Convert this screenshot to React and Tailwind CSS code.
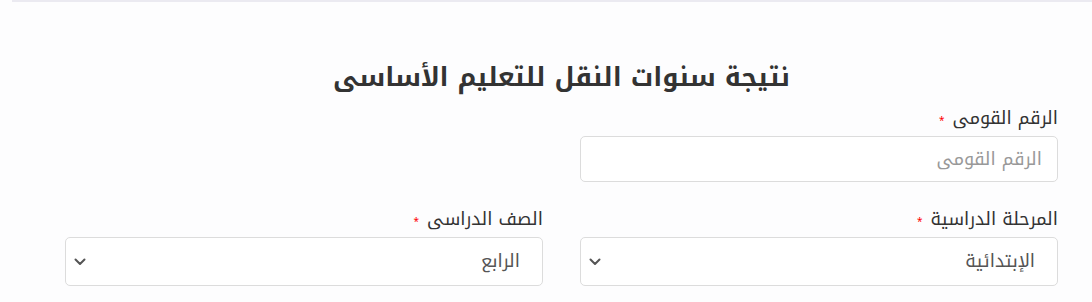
import React from "react";

const FONT = { fontFamily: '"Noto Kufi Arabic","Noto Sans Arabic","DejaVu Sans",sans-serif' };

function Chevron() {
  return (
    <svg className="pointer-events-none absolute left-[9px] top-1/2 -translate-y-1/2" width="12" height="8" viewBox="0 0 12 8" fill="none">
      <path d="M1.5 1.5 L6 6 L10.5 1.5" stroke="#555" strokeWidth="2" strokeLinecap="round" strokeLinejoin="round" />
    </svg>
  );
}

function Label({ children }) {
  return (
    <label className="mb-[6px] flex items-center gap-[8px] text-[18px] leading-[24px] text-[#333]">
      <span>{children}</span>
      <span className="translate-y-[3px] text-[10px] leading-none text-[#ff0000]">*</span>
    </label>
  );
}

function SelectField({ label, value }) {
  return (
    <div className="flex flex-col">
      <Label>{label}</Label>
      <div className="relative">
        <select
          defaultValue={value}
          className="h-[49px] w-full appearance-none rounded-[5px] border border-[#dcdcdc] bg-white pr-[22px] pl-[30px] text-[18px] text-[#555] outline-none"
          style={FONT}
        >
          <option value={value}>{value}</option>
        </select>
        <Chevron />
      </div>
    </div>
  );
}

export default function App() {
  return (
    <div dir="rtl" className="min-h-[302px] w-full bg-[#fdfdfe]" style={FONT}>
      <div className="ml-[12px] h-[2px] bg-[#ebeaf1]" />
      <div className="pl-[65px] pr-[34px] pt-[56px]">
        <h1 className="text-center text-[26px] font-bold leading-[40px] text-[#333]">
          نتيجة سنوات النقل للتعليم الأساسى
        </h1>
        <div className="mt-[8px] grid grid-cols-2 gap-x-[37px] gap-y-[25px]">
          <div className="flex flex-col">
            <Label>الرقم القومى</Label>
            <input
              placeholder="الرقم القومى"
              className="h-[46px] w-full rounded-[5px] border border-[#dcdcdc] bg-white px-[15px] text-[18px] text-[#555] outline-none placeholder:text-[#999]"
              style={FONT}
            />
          </div>
          <div />
          <SelectField label="المرحلة الدراسية" value="الإبتدائية" />
          <SelectField label="الصف الدراسى" value="الرابع" />
        </div>
      </div>
    </div>
  );
}
